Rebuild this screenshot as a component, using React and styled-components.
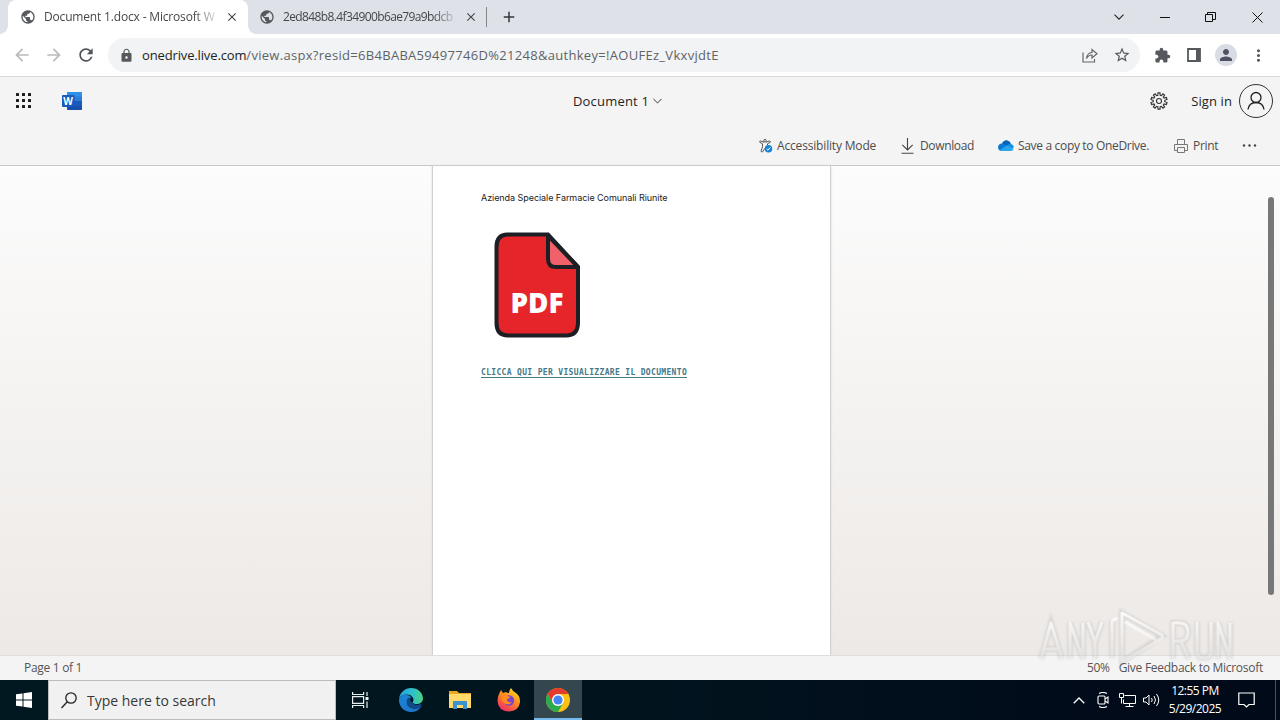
import React from "react";
import styled, { createGlobalStyle } from "styled-components";
import {
    MdPublic,
    MdArrowBack,
    MdArrowForward,
    MdRefresh,
    MdLock,
    MdStarBorder,
    MdExtension,
    MdPerson,
    MdMoreVert,
    MdClose,
    MdAdd,
} from "react-icons/md";

const GlobalStyle = createGlobalStyle`
* { box-sizing: border-box; }
body {
margin: 0;
overflow: hidden;
font-family: "Open Sans", "Noto Sans", sans-serif;
font-size: 12px;
color: #222;
}
svg { display: block; flex: none; }
`;

const Screen = styled.div`
position: relative;
width: 1280px;
height: 720px;
display: flex;
flex-direction: column;
overflow: hidden;
`;

const Text = styled.span`
white-space: nowrap;
font-size: ${(p) => p.$size || 12}px;
letter-spacing: ${(p) => p.$spacing || 0}px;
color: ${(p) => p.$color || "inherit"};
line-height: 18px;
`;

const Cell = styled.div`
width: ${(p) => p.$w}px;
height: 100%;
flex: none;
display: flex;
align-items: center;
justify-content: center;
`;

const Spacer = styled.div`
flex: 1;
`;

/* browser */

const TabStrip = styled.div`
height: 34px;
flex: none;
display: flex;
padding-left: 8px;
background: #dee1e8;
`;

const Tab = styled.div`
position: relative;
width: ${(p) => (p.$active ? 240 : 238)}px;
height: 34px;
display: flex;
align-items: center;
padding-left: ${(p) => (p.$active ? 12 : 11)}px;
border-radius: 8px 8px 0 0;
background: ${(p) => (p.$active ? "#fff" : "transparent")};
color: #44474b;
&::before, &::after {
content: "";
display: ${(p) => (p.$active ? "block" : "none")};
position: absolute;
bottom: 0;
width: 8px;
height: 8px;
}
&::before {
left: -8px;
background: radial-gradient(circle at 0 0, transparent 7.5px, #fff 8px);
}
&::after {
right: -8px;
background: radial-gradient(circle at 100% 0, transparent 7.5px, #fff 8px);
}
`;

const TabTitle = styled.div`
width: 171px;
margin: 0 10px 0 8px;
white-space: nowrap;
mask-image: linear-gradient(to right, #000 150px, rgba(0, 0, 0, 0.2) 171px);
`;

const TabDivider = styled.div`
width: 1px;
height: 20px;
margin-top: 7px;
background: #84878c;
`;

const Toolbar = styled.div`
height: 43px;
flex: none;
display: flex;
align-items: center;
padding-left: 6px;
background: #fff;
border-bottom: 1px solid #d5d7d9;
`;

const AddressBar = styled.div`
width: 1032px;
height: 34px;
display: flex;
align-items: center;
margin-left: 6px;
padding: 0 2px 0 11px;
border-radius: 17px;
background: #f1f3f4;
`;

const Url = styled.div`
margin-left: 8px;
white-space: nowrap;
font-size: 13px;
letter-spacing: 0.3px;
color: #5f6368;
b {
font-weight: 400;
letter-spacing: -0.14px;
color: #1d1f22;
}
`;

const Avatar = styled.div`
width: 22px;
height: 22px;
display: flex;
align-items: center;
justify-content: center;
border-radius: 50%;
background: #dadce5;
`;

/* office */

const OfficeHeader = styled.div`
height: 48px;
flex: none;
display: grid;
grid-template-columns: 1fr auto 1fr;
align-items: center;
background: #f4f4f4;
`;

const HeaderSide = styled.div`
height: 100%;
display: flex;
align-items: center;
justify-content: ${(p) => p.$align || "flex-start"};
`;

const DocName = styled.div`
display: flex;
align-items: center;
gap: 4px;
padding-right: 45px;
`;

const Account = styled.div`
width: 34px;
height: 34px;
margin: 0 7px;
display: flex;
align-items: center;
justify-content: center;
border: 1px solid #333;
border-radius: 50%;
`;

const CommandBar = styled.div`
height: 41px;
flex: none;
display: flex;
align-items: center;
justify-content: flex-end;
padding-right: 22px;
background: #f4f4f4;
border-bottom: 1px solid #c8c8c8;
color: #4c4c4c;
`;

const Command = styled.div`
width: ${(p) => p.$w}px;
height: 40px;
flex: none;
display: flex;
align-items: center;
gap: ${(p) => p.$gap || 4}px;
padding-top: 1px;
`;

const Canvas = styled.div`
height: 489px;
flex: none;
display: flex;
padding-left: 432px;
background: linear-gradient(#fcfcfc, #ede9e6);
`;

const Paper = styled.div`
width: 399px;
height: 100%;
padding: 23px 0 0 48px;
background: #fff;
border: 1px solid #d3d1d0;
border-width: 0 1px;
box-shadow: 0 0 2px #d8d6d5;
`;

const Company = styled.div`
height: 18px;
font-family: Inter, sans-serif;
font-size: 9px;
line-height: 18px;
letter-spacing: -0.06px;
color: #222;
white-space: nowrap;
`;

const PdfFile = styled.div`
width: 88px;
height: 108px;
margin: 24px 0 0 12px;
`;

const DocLink = styled.a`
display: block;
width: fit-content;
margin-top: 30px;
font-family: "DejaVu Sans Mono", monospace;
font-weight: bold;
font-size: 8px;
line-height: 8px;
letter-spacing: 0.335px;
color: #467886;
border-bottom: 1px solid #467886;
white-space: nowrap;
`;

const ScrollTrack = styled.div`
margin-left: auto;
padding: 31px 6px 0 0;
`;

const ScrollThumb = styled.div`
width: 6px;
height: 398px;
border-radius: 3px;
background: #777;
`;

const StatusBar = styled.div`
height: 25px;
flex: none;
display: flex;
align-items: center;
padding: 0 17px 0 24px;
background: #f4f4f4;
border-top: 1px solid #dedede;
color: #555;
`;

const Feedback = styled.div`
margin-left: 9px;
display: flex;
`;

const Watermark = styled.svg`
position: absolute;
left: 1034px;
top: 604px;
`;

/* windows taskbar */

const Taskbar = styled.div`
height: 40px;
flex: none;
display: flex;
background: linear-gradient(to right, #011820, #01141e 50%, #010b1a 85%, #010a18);
color: #fff;
`;

const SearchBox = styled.div`
width: 288px;
height: 40px;
display: flex;
align-items: center;
gap: 10px;
padding: 1px 0 0 12px;
border: 1px solid #bcbcbc;
background: #f1f1f1;
color: #383838;
`;

const AppButton = styled(Cell)`
width: ${(p) => p.$w || 49}px;
background: ${(p) => (p.$active ? "#34464e" : "transparent")};
border-bottom: ${(p) => (p.$active ? "2px solid #76b9ed" : "none")};
padding-top: ${(p) => (p.$active ? 2 : 0)}px;
`;

const Clock = styled.div`
width: 64px;
height: 40px;
display: flex;
flex-direction: column;
align-items: center;
padding-top: 2px;
`;

const Peek = styled.div`
width: 5px;
height: 40px;
border-left: 1px solid #4b5361;
`;

const gearPoints = () => {
    let pts = [];
    const teeth = 10;
    for (let i = 0; i < teeth; i++) {
        [[-0.32, 5.8], [-0.2, 8.2], [0.2, 8.2], [0.32, 5.8]].forEach(([off, r]) => {
            const a = ((i + off) / teeth) * Math.PI * 2;
            pts.push((9 + r * Math.sin(a)).toFixed(2) + "," + (9 - r * Math.cos(a)).toFixed(2));
        });
    }
    return pts.join(" ");
};

const Chevron = ({ w = 10, h = 6, color = "#333", up }) => (
    <svg width={w} height={h} viewBox="0 0 10 6" fill="none" stroke={color} strokeWidth="1.1">
        <path d={up ? "M.5 5.3 5 .8l4.5 4.5" : "M.5.7 5 5.2 9.5.7"} />
    </svg>
);

const Waffle = () => (
    <svg width="16" height="16" fill="#1b1b1b">
        {[0, 6, 12].map((y) => [0, 6, 12].map((x) => <rect key={x + "-" + y} x={x} y={y} width="3" height="3" rx=".5" />))}
    </svg>
);

const WordLogo = () => (
    <svg width="20" height="18" viewBox="0 0 20 18">
        <rect x="5" width="15" height="18" rx="1.2" fill="#2b7cd3" />
        <path d="M5 1.2Q5 0 6.2 0h12.6Q20 0 20 1.2V4.5H5z" fill="#2e8fe6" />
        <path d="M5 9h15v4.5H5z" fill="#185abd" />
        <path d="M5 13.5h15v3.3q0 1.2-1.2 1.2H6.2Q5 18 5 16.8z" fill="#1650a8" />
        <rect y="3" width="12.5" height="12" rx="1" fill="#185abd" />
        <text x="6.2" y="12.6" textAnchor="middle" fontFamily="Open Sans, sans-serif" fontSize="10" fontWeight="700" fill="#fff">W</text>
    </svg>
);

const AccessIcon = () => (
    <svg width="14" height="14" viewBox="0 0 14 14" fill="none" stroke="#555" strokeWidth="1">
        <circle cx="6" cy="1.8" r="1.3" />
        <path d="M5 3.2 1.8 2Q0 2.200.8 3.300L3.500 4.800v3L2 12q.3 1.500 1.600.8L6 9.2M7 3.200 10.200 2q1.800.2 1 1.300L8.500 4.800v1.500" />
        <circle cx="9.500" cy="9.800" r="3.800" fill="#1684d4" stroke="none" />
        <path d="m7.700 10 1.300 1.200 2.300-2.800" stroke="#fff" />
    </svg>
);

const DownloadIcon = () => (
    <svg width="13" height="16" viewBox="0 0 13 16" fill="none" stroke="#444" strokeWidth="1.1">
        <path d="M6.5 0v12M1.3 6.8l5.2 5.2 5.2-5.2M.5 15.3h12" />
    </svg>
);

const CloudIcon = () => (
    <svg width="16" height="11" viewBox="0 0 16 11">
        <path d="M4 4Q5.2 0 9 .3q3 .5 4 3.5l-5 4z" fill="#0364b8" />
        <path d="M4 3.5Q.3 3.7 0 7.2q.2 3.3 3.5 3.8L10 6.5Q7.5 3.3 4 3.5z" fill="#0b78d4" />
        <path d="M9 5.5q1.2-2 3.5-1.8 3 .8 3.5 3.5L11 10z" fill="#1490df" />
        <path d="M1.5 10.2 9 5.6l6.7 3.2Q15 11 12.5 11h-9q-1.3 0-2-.8z" fill="#28a8ea" />
    </svg>
);

const PrintIcon = () => (
    <svg width="14" height="14" viewBox="0 0 14 14" fill="none" stroke="#777">
        <path d="M3.5 5.5v-5h7v5M3.5 11.5h-3v-6h13v6h-3M3.5 8.5h7v5h-7z" />
    </svg>
);

const PdfIcon = () => (
    <svg width="88" height="108" viewBox="0 0 88 108">
        <path d="M14.500 3.500H55L85 36V91.500Q85 104.500 73 104.500H15Q3.500 104.500 3.500 92V16Q3.500 3.500 14.500 3.500Z" fill="#e6252b" stroke="#1c1f24" strokeWidth="4" />
        <path d="M55 4.500V28Q55 36 63 36H85Z" fill="#f0616b" stroke="#1c1f24" strokeWidth="4" strokeLinejoin="round" />
        <text x="17.500" y="81.500" fontFamily="Open Sans, sans-serif" fontSize="28" fontWeight="800" fill="#fff" textLength="53" lengthAdjust="spacingAndGlyphs">PDF</text>
    </svg>
);

const lettersPath = "M7 55 17 19 28 55M10 45H25M36 55V19L49 55V19M54 18l7 20 7-20M61 38V55M139 55V19h7q8 0 8 9t-8 9h-7M147 37l8 18M163 18V47q0 7 7 7t7-7V18M184 55V19L196 55V19";

const AnyRun = () => (
    <Watermark width="206" height="68" viewBox="0 0 206 68">
        <defs>
            <linearGradient id="mark" x1="0" y1="0" x2="0" y2="62" gradientUnits="userSpaceOnUse">
                <stop offset=".1" stopColor="#fff" stopOpacity=".9" />
                <stop offset=".9" stopColor="#fff" stopOpacity=".25" />
            </linearGradient>
            <filter id="soft" x="-5%" y="-10%" width="110%" height="120%"><feGaussianBlur stdDeviation="1" /></filter>
        </defs>
        <g fill="none" stroke="#777" strokeOpacity=".17" strokeWidth="6" filter="url(#soft)">
            <path d={lettersPath} />
            <path d="M78 54V16M88 9 128 32 88 58Z" />
        </g>
        <g fill="none" stroke="url(#mark)" strokeWidth="3" strokeLinejoin="round">
            <path d={lettersPath} />
            <path d="M78 54V17l5-3M88 58V9L128 31q2 3-3 5L88 58M91 18 122 36" />
        </g>
    </Watermark>
);

const EdgeIcon = () => (
    <svg width="24" height="24" viewBox="0 0 24 24">
        <defs>
            <linearGradient id="edgeTop" x1="0" x2="1"><stop offset="0" stopColor="#259fe0" /><stop offset=".6" stopColor="#2fc2c8" /><stop offset="1" stopColor="#4fd07a" /></linearGradient>
            <linearGradient id="edgeLow" x1="0" x2="1" y2="1"><stop offset="0" stopColor="#1b86d8" /><stop offset="1" stopColor="#1f70c0" /></linearGradient>
        </defs>
        <path d="M0 11C1 4 6 0 12 0c7 0 12 5 12 10.500 0 3.500-3 5.500-6.500 5.500-3 0-4.500-1-3.500-2.500C16 10 12 6.500 8 6.500 4 6.500 1 8 0 11z" fill="url(#edgeTop)" />
        <path d="M0 12C.5 8 5 6 8.500 7c2 .5 3.500 1.700 4.300 3C9 9 7.500 12 8 15c.7 4 5 6 9 5.500 2.500-.3 4-1.500 5-1.500-2 3-5.500 5-10 5C5 24 0 18.500 0 12z" fill="url(#edgeLow)" />
        <path d="M8 15c-.5-3 1-5 3.500-5 1 0 2 .5 2.500 1.500-.3 1-1.500 2-.5 3.500 1.300 2 6 2.300 8.500.8l.5 2.700C18 22 9 21 8 15z" fill="#114a8b" />
        <path d="M11.500 10q2.500 0 2.700 2-.2 1-1.200 2.200-2.500-1-1.500-4.200z" fill="#01141e" />
    </svg>
);

const FolderIcon = () => (
    <svg width="22" height="20" viewBox="0 0 22 20">
        <path d="M0 1h8l2 2h12v15H0z" fill="#e8a825" />
        <path d="M0 4h22v14H0z" fill="#ffd96a" />
        <path d="M4 19v-7q0-1 1-1h12q1 0 1 1v7h-4v-4H8v4z" fill="#3c91d0" />
    </svg>
);

const FirefoxIcon = () => (
    <svg width="24" height="24" viewBox="0 0 24 24">
        <defs><linearGradient id="fox" x1=".8" x2=".2" y2="1"><stop offset="0" stopColor="#ffe226" /><stop offset=".45" stopColor="#ff8a1f" /><stop offset="1" stopColor="#f0246b" /></linearGradient></defs>
        <path d="M2 6 4 2l2 3 3-1q1 1 3 1 0-3 2-5 2 4 5 5l2 2q2 2 2 7-1 9-11 9.500Q1 23 .5 13 .5 9 2 6z" fill="url(#fox)" />
        <circle cx="12" cy="12.500" r="5.200" fill="#7b43cf" />
        <path d="M4 7q4-2 6 1l3 .5q0 2-3 2.500 0 4 5 3-3 4-8 1-3-3-3-8z" fill="#ff8b1c" />
    </svg>
);

const ChromeIcon = () => (
    <svg width="24" height="24" viewBox="0 0 24 24">
        <circle cx="12" cy="12" r="12" fill="#fbc116" />
        <path d="M1.600 6A12 12 0 0 1 22.400 6H12L6.800 15z" fill="#e33b2e" />
        <path d="M1.600 6A12 12 0 0 0 12 24l5.200-9-5.200 2-5.200-2z" fill="#2da94f" />
        <circle cx="12" cy="12" r="6" fill="#fff" />
        <circle cx="12" cy="12" r="4.600" fill="#4285f4" />
    </svg>
);

const BrowserTab = (props) => {
    return <Tab $active={props.active}>
        <MdPublic size={16} color="#55585c" />
        <TabTitle><Text $spacing={props.spacing}>{props.title}</Text></TabTitle>
        <MdClose size={14} color="#45484c" />
    </Tab>
}

const Browser = () => {
    return <>
        <TabStrip>
            <BrowserTab active title="Document 1.docx - Microsoft W" spacing={-0.17} />
            <BrowserTab title="2ed848b8.4f34900b6ae79a9bdcb" spacing={-0.62} />
            <TabDivider />
            <Cell $w={43}><MdAdd size={18} color="#35383d" /></Cell>
            <Spacer />
            <Cell $w={46}><Chevron color="#222" /></Cell>
            <Cell $w={46}><svg width="10" height="1"><path d="M0 .5h10" stroke="#111" /></svg></Cell>
            <Cell $w={46}>
                <svg width="12" height="11" fill="none" stroke="#111"><path d="M.5 2.500h7v7h-7zM2.500 2.500v-2h8v7h-3" /></svg>
            </Cell>
            <Cell $w={46}>
                <svg width="11" height="11" fill="none" stroke="#111"><path d="m.5.5 10 10M10.500.5l-10 10" /></svg>
            </Cell>
        </TabStrip>
        <Toolbar>
            <Cell $w={32}><MdArrowBack size={20} color="#b8babd" /></Cell>
            <Cell $w={32}><MdArrowForward size={20} color="#b8babd" /></Cell>
            <Cell $w={32}><MdRefresh size={20} color="#4f5358" /></Cell>
            <AddressBar>
                <MdLock size={15} color="#55595e" />
                <Url><b>onedrive.live.com</b>/view.aspx?resid=6B4BABA59497746D%21248&amp;authkey=!AOUFEz_VkxvjdtE</Url>
                <Spacer />
                <Cell $w={32}>
                    <svg width="16" height="15" viewBox="0 0 16 15" fill="none" stroke="#64686d" strokeWidth="1.200">
                        <path d="M1 4.500v9.500h11.500v-3M4.500 10.500Q5 5 10 4.500V1.500l5 4.200-5 4.200V7Q6.500 7 4.500 10.500z" />
                    </svg>
                </Cell>
                <Cell $w={32}><MdStarBorder size={18} color="#55595e" /></Cell>
            </AddressBar>
            <Cell $w={6} />
            <Cell $w={32}><MdExtension size={17} color="#55595e" /></Cell>
            <Cell $w={32}>
                <svg width="14" height="14"><path d="M1 1h12v12H1z" fill="#fff" stroke="#55595e" strokeWidth="1.800" /><path d="M9 1h4v12H9z" fill="#55595e" /></svg>
            </Cell>
            <Cell $w={32}><Avatar><MdPerson size={18} color="#4e5260" /></Avatar></Cell>
            <Cell $w={32}><MdMoreVert size={19} color="#55595e" /></Cell>
        </Toolbar>
    </>
}

const Office = () => {
    return <>
        <OfficeHeader>
            <HeaderSide>
                <Cell $w={48}><Waffle /></Cell>
                <Cell $w={48}><WordLogo /></Cell>
            </HeaderSide>
            <DocName>
                <Text $size={13} $spacing={0.2} $color="#1f1f1f">Document 1</Text>
                <Chevron w={9} />
            </DocName>
            <HeaderSide $align="flex-end">
                <Cell $w={48}>
                    <svg width="18" height="18" fill="none" stroke="#333" strokeWidth="1.100">
                        <polygon points={gearPoints()} /><circle cx="9" cy="9" r="2.500" />
                    </svg>
                </Cell>
                <Cell $w={8} />
                <Text $size={13} $spacing={0.1}>Sign in</Text>
                <Account>
                    <svg width="18" height="20" fill="none" stroke="#222" strokeWidth="1.300">
                        <circle cx="9" cy="6.500" r="5" /><path d="M1 18.500q1-7 8-7t8 7" />
                    </svg>
                </Account>
            </HeaderSide>
        </OfficeHeader>
        <CommandBar>
            <Command $w={142}><AccessIcon /><Text $spacing={-0.17}>Accessibility Mode</Text></Command>
            <Command $w={97} $gap={6}><DownloadIcon /><Text $spacing={-0.35}>Download</Text></Command>
            <Command $w={176}><CloudIcon /><Text $spacing={-0.33}>Save a copy to OneDrive.</Text></Command>
            <Command $w={68} $gap={5}><PrintIcon /><Text $spacing={-0.3}>Print</Text></Command>
            <Command $w={16}>
                <svg width="15" height="3" fill="#444"><circle cx="2" cy="1.500" r="1.200" /><circle cx="7.500" cy="1.500" r="1.200" /><circle cx="13" cy="1.500" r="1.200" /></svg>
            </Command>
        </CommandBar>
        <Canvas>
            <Paper>
                <Company>Azienda Speciale Farmacie Comunali Riunite</Company>
                <PdfFile><PdfIcon /></PdfFile>
                <DocLink>CLICCA QUI PER VISUALIZZARE IL DOCUMENTO</DocLink>
            </Paper>
            <ScrollTrack><ScrollThumb /></ScrollTrack>
        </Canvas>
        <StatusBar>
            <Text $spacing={-0.3}>Page 1 of 1</Text>
            <Spacer />
            <Text $spacing={-0.3}>50%</Text>
            <Feedback><Text $spacing={-0.27}>Give Feedback to Microsoft</Text></Feedback>
        </StatusBar>
    </>
}

const WindowsBar = () => {
    return <Taskbar>
        <Cell $w={48}>
            <svg width="16" height="16" fill="#fff"><path d="M0 2.300 6.500 1.400V7.500H0zM7.500 1.200 16 0V7.500H7.500zM0 8.500h6.500v6.100L0 13.700zM7.500 8.500H16V16l-8.500-1.200z" /></svg>
        </Cell>
        <SearchBox>
            <svg width="16" height="17" fill="none" stroke="#222" strokeWidth="1.300"><circle cx="10" cy="6" r="5.200" /><path d="M6.300 9.700.5 16" /></svg>
            <Text $size={14} $spacing={0}>Type here to search</Text>
        </SearchBox>
        <AppButton $w={48}>
            <svg width="17" height="16" fill="none" stroke="#e8edef" strokeWidth="1.200"><path d="M.6 0v2.500h11V0M.6 16v-2.500h11V16M.6 4.600h11v6.800H.6zM15 0v4M15 9.500V16M15 5v3" /><path d="M13.500 5h3v3h-3z" fill="#e8edef" stroke="none" /></svg>
        </AppButton>
        <AppButton $w={53}><EdgeIcon /></AppButton>
        <AppButton $w={46}><FolderIcon /></AppButton>
        <AppButton $w={51}><FirefoxIcon /></AppButton>
        <AppButton $w={48} $active><ChromeIcon /></AppButton>
        <Spacer />
        <Cell $w={24}><Chevron w={12} h={7} color="#fff" up /></Cell>
        <Cell $w={24}>
            <svg width="12" height="16" fill="none" stroke="#fff" strokeWidth="1.100"><rect x="1" y="4" width="7" height="8" rx="1" /><path d="m8 7 3-2v6L8 9M2 1.500q4-2 8 0M2 14.500q4 2 8 0" /></svg>
        </Cell>
        <Cell $w={24}>
            <svg width="17" height="14" fill="none" stroke="#fff"><path d="M5.500 2.500h11v8h-12v-4M10.500 10.500v3M6.500 13.500h8M.5.5h4v4h-4zM2.500 4.500v6" /></svg>
        </Cell>
        <Cell $w={24}>
            <svg width="17" height="14" fill="none" stroke="#fff"><path d="M.5 5h2.500l3-3v10l-3-3H.5zM8.500 5q1.500 2 0 4M11 3q3 4 0 8M13.500 1q4.500 6 0 12" /></svg>
        </Cell>
        <Clock>
            <Text $spacing={-0.5}>12:55 PM</Text>
            <Text $spacing={-0.5}>5/29/2025</Text>
        </Clock>
        <Cell $w={39}>
            <svg width="17" height="17" fill="none" stroke="#fff" strokeWidth="1.200"><path d="M.8 1h15.400v11.500H11L8.500 15 6 12.500H.8z" /></svg>
        </Cell>
        <Cell $w={9} />
        <Peek />
    </Taskbar>
}

export default function App() {
    return <Screen>
        <GlobalStyle />
        <Browser />
        <Office />
        <WindowsBar />
        <AnyRun />
    </Screen>
}
